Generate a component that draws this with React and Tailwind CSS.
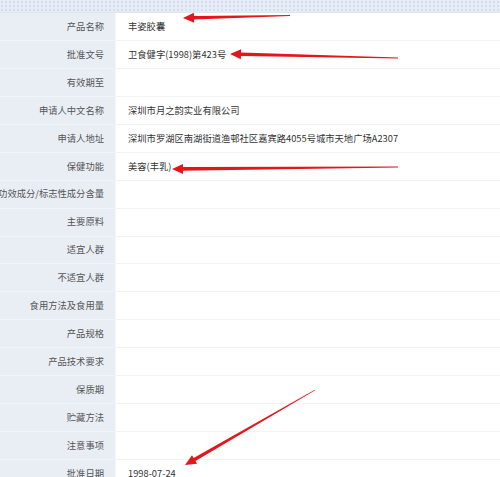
import React from 'react';

const rows = [
  ['产品名称', '丰姿胶囊'],
  ['批准文号', '卫食健字(1998)第423号'],
  ['有效期至', ''],
  ['申请人中文名称', '深圳市月之韵实业有限公司'],
  ['申请人地址', '深圳市罗湖区南湖街道渔邨社区嘉宾路4055号城市天地广场A2307'],
  ['保健功能', '美容(丰乳)'],
  ['功效成分/标志性成分含量', ''],
  ['主要原料', ''],
  ['适宜人群', ''],
  ['不适宜人群', ''],
  ['食用方法及食用量', ''],
  ['产品规格', ''],
  ['产品技术要求', ''],
  ['保质期', ''],
  ['贮藏方法', ''],
  ['注意事项', ''],
  ['批准日期', '1998-07-24'],
];

// tapered red arrow, tail thin, head at tip
const Arrow = ({ tail, tip }) => {
  const [x1, y1] = tail, [x2, y2] = tip;
  const dx = x2 - x1, dy = y2 - y1, len = Math.hypot(dx, dy);
  const ux = dx / len, uy = dy / len, nx = -uy, ny = ux;
  const hl = 11, hw = 5, sw = 1.8, tw = 0.4;
  const bx = x2 - ux * hl, by = y2 - uy * hl;
  const pts = [
    [x1 + nx * tw, y1 + ny * tw],
    [bx + nx * sw, by + ny * sw],
    [bx + nx * hw, by + ny * hw],
    [x2, y2],
    [bx - nx * hw, by - ny * hw],
    [bx - nx * sw, by - ny * sw],
    [x1 - nx * tw, y1 - ny * tw],
  ].map(p => p.join(',')).join(' ');
  return <polygon points={pts} fill="#e3161b" />;
};

export default function App() {
  return (
    <div className="relative w-[500px] h-[477px] overflow-hidden bg-white text-[9.3px] leading-none" style={{ fontFamily: '"Microsoft YaHei", "Noto Sans CJK SC", sans-serif' }}>
      <div className="h-[13px] bg-[#e5ecf6] border-b border-[#dfe6f1]" style={{ backgroundImage: 'radial-gradient(#d3deef 0.8px, transparent 0.9px)', backgroundSize: '4px 4px' }} />
      <div className="flex flex-col">
        {rows.map(([label, value]) => (
          <div key={label} className="flex h-[27.94px] border-b border-[#f1f3f6]">
            <div className="w-[116px] shrink-0 bg-[#e9eef5] flex items-center justify-end pr-[11px] text-[#555] whitespace-nowrap border-r border-[#f3f6fa]">
              {label}
            </div>
            <div className="flex-1 flex items-center pl-[12px] text-[#333] whitespace-nowrap">
              {value}
            </div>
          </div>
        ))}
      </div>
      <svg className="absolute inset-0 pointer-events-none" width="500" height="477">
        <Arrow tail={[290, 15.5]} tip={[183, 18]} />
        <Arrow tail={[398, 58]} tip={[230, 54]} />
        <Arrow tail={[398, 167]} tip={[172, 169]} />
        <Arrow tail={[315, 390]} tip={[185, 465]} />
      </svg>
    </div>
  );
}
